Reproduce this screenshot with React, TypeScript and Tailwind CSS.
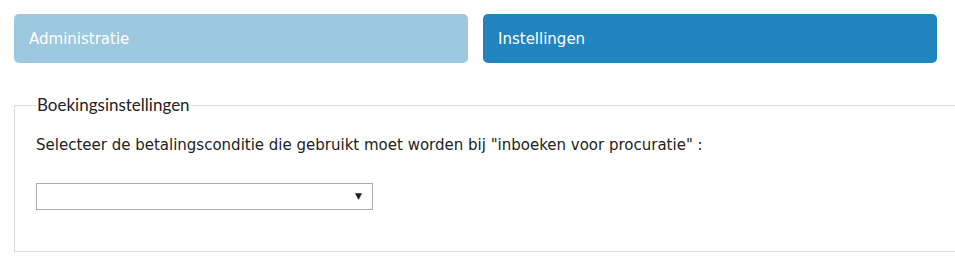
import React from "react";

const tabs = [
  { label: "Administratie", active: false },
  { label: "Instellingen", active: true },
];

const App = () => {
  return (
    <div className="w-[955px] h-[269px] overflow-hidden bg-white pt-[14px] pl-[14px] font-['DejaVu_Sans',Verdana,sans-serif]">
      <div className="flex gap-[15px]">
        {tabs.map((tab) => (
          <div
            key={tab.label}
            className={`flex items-center w-[454px] h-[49px] rounded-[5px] px-[15px] pt-[2px] text-[15px] text-white ${
              tab.active ? "bg-[#2184be]" : "bg-[#9cc8e0]"
            }`}
          >
            {tab.label}
          </div>
        ))}
      </div>

      <fieldset className="mt-[32px] w-[980px] h-[157px] border border-[#dcdcdc] px-[21px]">
        <legend className="px-[1px] text-[17px] leading-[20px] text-[#222] font-['Lato',sans-serif]">
          Boekingsinstellingen
        </legend>
        <p className="mt-[20px] text-[15px] leading-[20px] text-[#222]">
          Selecteer de betalingsconditie die gebruikt moet worden bij "inboeken voor procuratie" :
        </p>
        <div className="mt-[28px] relative w-[337px] h-[27px] border border-[#a9a9a9] bg-white">
          <span className="absolute right-[10px] top-[6px] text-[9px] text-[#222]">▼</span>
        </div>
      </fieldset>
    </div>
  );
};

export default App;
